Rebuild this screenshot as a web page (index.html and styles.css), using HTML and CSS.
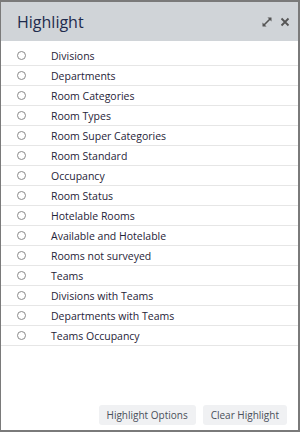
FILE: index.html
```html
<!DOCTYPE html>
<html>
<head>
<meta charset="utf-8">
<link rel="stylesheet" href="styles.css">
</head>
<body>
<div class="panel">
  <div class="header">
    <div class="title">Highlight</div>
    <div class="tools">
      <svg class="icon" width="10" height="10" viewBox="0 0 10 10">
        <path d="M2 8 L8 2" stroke="#555" stroke-width="1.6" fill="none"/>
        <path d="M0.5 9.5 L0.5 5.5 L4.5 9.5 Z" fill="#555"/>
        <path d="M9.5 0.5 L9.5 4.5 L5.5 0.5 Z" fill="#555"/>
      </svg>
      <svg class="icon" width="10" height="10" viewBox="0 0 10 10">
        <path d="M1.5 1.5 L8.5 8.5 M8.5 1.5 L1.5 8.5" stroke="#555" stroke-width="1.8" fill="none"/>
      </svg>
    </div>
  </div>
  <ul class="list">
    <li><span class="radio"></span><span>Divisions</span></li>
    <li><span class="radio"></span><span>Departments</span></li>
    <li><span class="radio"></span><span>Room Categories</span></li>
    <li><span class="radio"></span><span>Room Types</span></li>
    <li><span class="radio"></span><span>Room Super Categories</span></li>
    <li><span class="radio"></span><span>Room Standard</span></li>
    <li><span class="radio"></span><span>Occupancy</span></li>
    <li><span class="radio"></span><span>Room Status</span></li>
    <li><span class="radio"></span><span>Hotelable Rooms</span></li>
    <li><span class="radio"></span><span>Available and Hotelable</span></li>
    <li><span class="radio"></span><span>Rooms not surveyed</span></li>
    <li><span class="radio"></span><span>Teams</span></li>
    <li><span class="radio"></span><span>Divisions with Teams</span></li>
    <li><span class="radio"></span><span>Departments with Teams</span></li>
    <li><span class="radio"></span><span>Teams Occupancy</span></li>
  </ul>
  <div class="footer">
    <button class="btn">Highlight Options</button>
    <button class="btn">Clear Highlight</button>
  </div>
</div>
</body>
</html>
```
FILE: styles.css
```css
* { box-sizing: border-box; }
html, body { margin: 0; padding: 0; background: #fff; }
body { font-family: "Open Sans", "Liberation Sans", sans-serif; width: 300px; height: 440px; }
.panel {
  width: 300px;
  height: 432px;
  border-top: 2px solid #7a7a7a;
  border-left: 1px solid #7a7a7a;
  border-right: 2px solid #7a7a7a;
  border-bottom: 2px solid #7a7a7a;
  display: flex;
  flex-direction: column;
}
.header {
  height: 39px;
  background: #d0d4d8;
  display: flex;
  align-items: center;
  justify-content: space-between;
  padding: 0 8px 0 16px;
}
.title {
  font-size: 16px;
  color: #1f2b4d;
  padding-top: 1px;
}
.tools { display: flex; align-items: center; gap: 8px; padding-top: 1px; }
.icon { display: block; }
.list {
  list-style: none;
  margin: 5px 0 0 0;
  padding: 0;
}
.list li {
  height: 20px;
  display: flex;
  align-items: center;
  border-bottom: 1px solid #e6e6e6;
  font-size: 10.5px;
  color: #1f2438;
  padding-left: 16px;
}
.radio {
  width: 9px;
  height: 9px;
  border: 1px solid #8a8a8a;
  border-radius: 50%;
  margin-right: 25px;
  flex: none;
}
.footer {
  margin-top: auto;
  display: flex;
  justify-content: flex-end;
  gap: 7px;
  padding: 0 11px 5px 0;
}
.btn {
  font-family: "Open Sans", "Liberation Sans", sans-serif;
  font-size: 10px;
  color: #4a4f5a;
  background: #f0f1f3;
  border: none;
  border-radius: 3px;
  height: 20px;
  padding: 0 8px;
}
```
